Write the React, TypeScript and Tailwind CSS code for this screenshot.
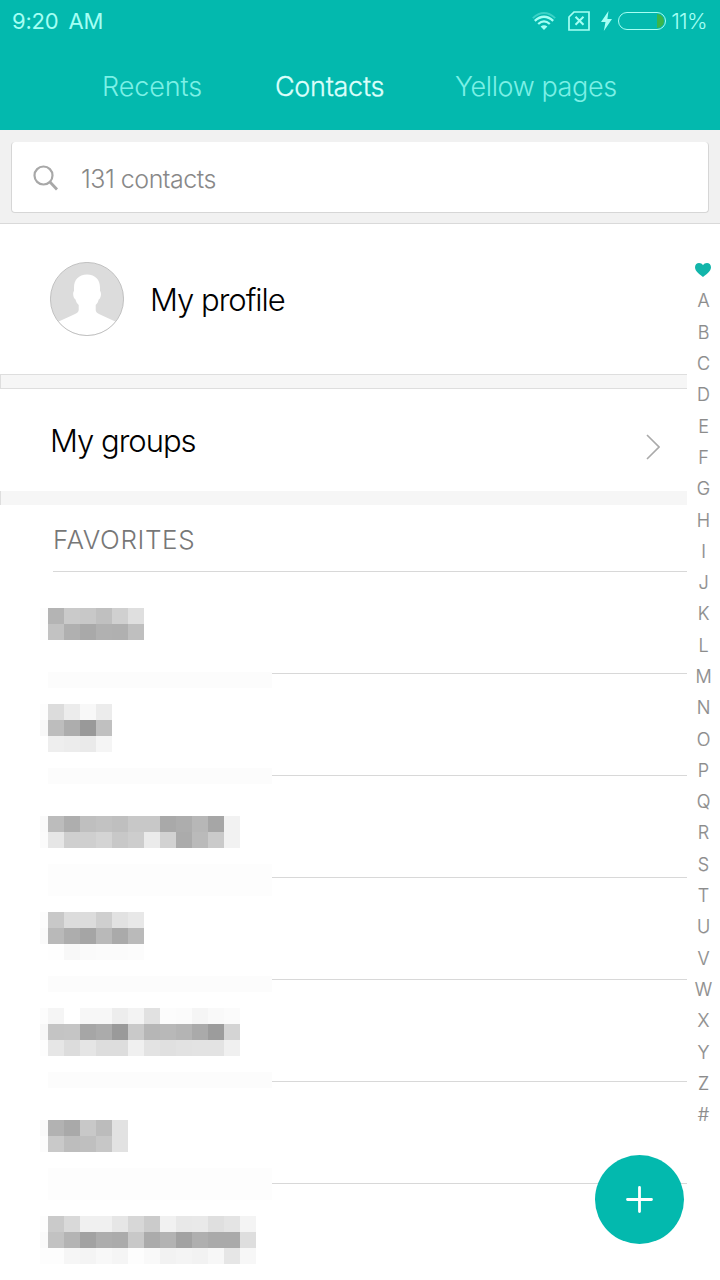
import clsx from 'clsx';

interface Favorite {
  id: number;
  offset: string;
  edge: string[];
  cells: string[][];
  veil?: string;
}

// Every name is hidden behind a mosaic of 16px grey tiles, one hex level per tile.
const FAVORITES: Favorite[] = [
  {
    id: 1,
    offset: 'pt-[36px]',
    edge: ['fd', 'fd'],
    cells: [
      ['b4', 'ca', 'c8', 'c0', 'd0', 'df'],
      ['c2', 'b0', 'a9', 'b1', 'b0', 'bf'],
    ],
    veil: 'top-[100px] h-[16px] bg-[#fcfcfc]',
  },
  {
    id: 2,
    offset: 'pt-[30px]',
    edge: ['fd', 'f8', 'ff'],
    cells: [
      ['dc', 'ec', 'f8', 'ec'],
      ['bd', 'ad', '99', 'c0'],
      ['ee', 'ec', 'ea', 'f5'],
    ],
    veil: 'top-[94px] h-[16px] bg-[#fcfcfc]',
  },
  {
    id: 3,
    offset: 'pt-[40px]',
    edge: ['fa', 'fb'],
    cells: [
      ['bc', 'ae', 'bf', 'c2', 'bf', 'c8', 'c8', 'a9', 'ad', 'b7', 'a6', 'f2'],
      ['e6', 'cf', 'cf', 'd4', 'c8', 'cd', 'eb', 'd2', 'ab', 'ba', 'ca', 'f2'],
    ],
    veil: 'top-[88px] h-[32px] bg-[#fdfdfd]',
  },
  {
    id: 4,
    offset: 'pt-[34px]',
    edge: ['fc', 'fa', 'ff'],
    cells: [
      ['c8', 'dc', 'dc', 'cf', 'e2', 'e8'],
      ['b9', 'ad', 'a5', 'b9', 'aa', 'ba'],
      ['fe', 'f8', 'fa', 'fb', 'fb', 'fc'],
    ],
    veil: 'top-[98px] h-[16px] bg-[#fcfcfc]',
  },
  {
    id: 5,
    offset: 'pt-[28px]',
    edge: ['fc', 'f7', 'fd'],
    cells: [
      ['f5', 'ff', 'f7', 'f7', 'ed', 'f3', 'e1', 'fc', 'fb', 'f5', 'f9', 'fb'],
      ['c4', 'c5', 'a6', 'ab', '9a', 'c9', 'b6', 'b8', 'b4', 'aa', '9c', 'd4'],
      ['e6', 'dc', 'e5', 'dd', 'dd', 'f0', 'e3', 'e0', 'e2', 'e3', 'e3', 'f0'],
    ],
    veil: 'top-[92px] h-[16px] bg-[#fcfcfc]',
  },
  {
    id: 6,
    offset: 'pt-[38px]',
    edge: ['f9', 'fc'],
    cells: [
      ['b2', 'a9', 'c8', 'bc', 'e2'],
      ['c9', 'bd', 'bf', 'c7', 'e2'],
    ],
    veil: 'top-[86px] h-[32px] bg-[#fdfdfd]',
  },
  {
    id: 7,
    offset: 'pt-[32px]',
    edge: ['fd', 'fa', 'fd'],
    cells: [
      ['ca', 'd9', 'f0', 'f0', 'e6', 'd7', 'cb', 'f1', 'e8', 'e9', 'df', 'e4', 'f4'],
      ['c2', 'b4', 'a2', 'ad', 'ab', 'c8', 'ab', 'b3', 'a2', 'af', 'aa', 'aa', 'de'],
      ['fd', 'f6', 'f4', 'f8', 'f5', 'fd', 'f9', 'f2', 'f4', 'f2', 'f7', 'e6', 'f7'],
    ],
  },
];

const INDEX = 'ABCDEFGHIJKLMNOPQRSTUVWXYZ#'.split('');

const StatusBar = () => (
  <div className="flex h-[42px] items-center justify-between pl-3 pr-[13px] text-[#a5fff4]">
    <span className="text-[22px] tracking-[-0.2px] [word-spacing:4px]">9:20 AM</span>
    <div className="flex items-center">
      <svg className="mr-3" width="24" height="18" viewBox="0 0 24 18" fill="none" stroke="currentColor">
        <path d="M.8 6.200Q12-4.200 23.200 6.200" strokeWidth="1.8" opacity="0.35" />
        <path d="M2.800 8.800Q12 .6 21.200 8.800" strokeWidth="2.4" />
        <path d="M6.200 12Q12 6.800 17.800 12" strokeWidth="2.3" />
        <path d="M8.600 14.600Q12 11.800 15.400 14.600L12 18z" fill="currentColor" stroke="none" />
      </svg>
      <svg className="mr-[11px]" width="22" height="20" viewBox="0 0 22 20" fill="none" stroke="currentColor" strokeWidth="1.7">
        <path d="M6 1h15v18H1V6z" />
        <path d="M7.500 5.800l8 8M15.500 5.800l-8 8" strokeWidth="2" />
      </svg>
      <svg className="mr-1.5" width="11" height="20" viewBox="0 0 11 20" fill="currentColor">
        <path d="M7.5 0L0 11h4.500L2.800 20 11 8H6.400z" />
      </svg>
      <div className="flex h-[18px] w-[48px] justify-end overflow-hidden rounded-full border-[1.5px] border-current p-px">
        <div className="h-full w-[7px] rounded-r-full bg-[#3bb54a]" />
      </div>
      <span className="ml-[5px] text-[22px] font-light tracking-[-0.7px]">11%</span>
    </div>
  </div>
);

const Tabs = () => (
  <nav className="flex h-[88px] items-center pt-0.5 pl-[102px] text-[27px] font-light text-[#7cf0e6]">
    <span className="w-[173px] tracking-[-0.1px]">Recents</span>
    <span className="w-[180px] tracking-[-0.3px] text-[#dcfffb] [-webkit-text-stroke:0.3px]">Contacts</span>
    <span className="tracking-[-0.4px]">Yellow pages</span>
  </nav>
);

const SearchBar = () => (
  <div className="h-[94px] border-b border-[#d9d9d9] bg-[#f1f1f1] px-[11px] pt-3">
    <div className="flex h-[71px] items-center rounded-[4px] border border-t-0 border-[#d6d6d6] bg-white pl-[21px]">
      <svg className="mt-px" width="26" height="26" viewBox="0 0 26 26" fill="none" stroke="#a8a8a8" strokeWidth="2.2">
        <circle cx="10.500" cy="10.500" r="9" />
        <path d="M17 17l7 7.500" strokeWidth="2.8" />
      </svg>
      <span className="mt-[5px] ml-[22px] text-[25px] font-light tracking-[-0.5px] text-[#888]">131 contacts</span>
    </div>
  </div>
);

const Avatar = () => (
  <svg width="74" height="74" viewBox="0 0 74 74">
    <circle cx="37" cy="37" r="36.5" fill="#dcdcdc" />
    <path
      d="M37 12.500C28.500 12.500 24 18 24 25.500V29C22.500 30.500 23 36 25.500 37.500C26.300 40 27 41.500 28.700 43V48C28.700 50 27 51 24 52.500L8.700 59.500A36.500 36.500 0 0 0 65.300 59.500L50 52.500C47 51 45.700 50 45.700 48V43C47.300 41.500 48 40 48.700 37.500C51.200 36 51.700 30.500 50 29V25.500C50 18 45.500 12.500 37 12.500z"
      fill="#fff"
    />
    <circle cx="37" cy="37" r="36.600" fill="none" stroke="#b5b5b5" strokeWidth="0.8" />
  </svg>
);

const FavoriteRow = ({ favorite }: { favorite: Favorite }) => (
  <li className={clsx('relative flex h-[102px] items-start border-b border-[#d8d8d8] pl-[40px]', favorite.offset)}>
    <div>
      {favorite.cells.map((row, y) => (
        <div key={y} className="flex h-4">
          <div className="w-2" style={{ backgroundColor: `#${favorite.edge[y].repeat(3)}` }} />
          {row.map((level, x) => (
            <div key={x} className="w-4" style={{ backgroundColor: `#${level.repeat(3)}` }} />
          ))}
        </div>
      ))}
    </div>
    {/* the divider only shows to the right of the censored area */}
    <div className="absolute top-[101px] left-0 h-px w-[272px] bg-white" />
    {favorite.veil && <div className={clsx('absolute left-[48px] w-[224px]', favorite.veil)} />}
  </li>
);

const LetterIndex = () => (
  <div className="flex w-[33px] flex-col items-center pt-[30px] text-[18px] text-[#8c8c8c]">
    <div className="flex h-[31.31px] items-center pr-0.5">
      <svg width="18" height="16" viewBox="0 0 18 16" fill="#12b5aa">
        <path d="M9 15C6 12.500 1 9.500 1 5.200 1 2.600 2.900 1 5 1c1.700 0 3.200.8 4 2.300C9.800 1.800 11.300 1 13 1c2.100 0 4 1.600 4 4.200C17 9.500 12 12.500 9 15z" />
      </svg>
    </div>
    {INDEX.map((letter) => (
      <div key={letter} className="flex h-[31.31px] items-center font-light [-webkit-text-stroke:0.2px]">
        {letter}
      </div>
    ))}
  </div>
);

export default function App() {
  return (
    <div className="relative h-[1280px] w-[720px] overflow-hidden bg-white font-['Inter','Liberation_Sans',sans-serif]">
      <header className="h-[130px] bg-[#03b9ae]">
        <StatusBar />
        <Tabs />
      </header>
      <SearchBar />

      <div className="flex">
        <main className="w-[687px]">
          <div className="flex h-[150px] items-center gap-[26px] pl-[50px] text-[31px] font-light text-black">
            <Avatar />
            <span className="pt-0.5 tracking-[-1px]">My profile</span>
          </div>
          <div className="h-[15px] border border-r-0 border-[#dedede] bg-[#f6f6f6]" />
          <div className="flex h-[102px] items-center justify-between pl-[50px] pr-[27px]">
            <span className="pt-0.5 text-[31px] font-light tracking-[-1px] text-black">My groups</span>
            <svg className="mt-[14px]" width="14" height="26" viewBox="0 0 14 26" fill="none" stroke="#aaa" strokeWidth="1.6">
              <path d="M1 1l12 12L1 25" />
            </svg>
          </div>
          <div className="h-[14px] border-l border-[#dedede] bg-[#f6f6f6]" />
          <div className="flex h-[66px] items-center pt-0.5 pl-[53px] text-[26px] font-light tracking-[0.6px] text-[#777]">
            FAVORITES
          </div>
          <div className="ml-[53px] h-px bg-[#d8d8d8]" />
          <ul>
            {FAVORITES.map((favorite) => (
              <FavoriteRow key={favorite.id} favorite={favorite} />
            ))}
          </ul>
        </main>
        <LetterIndex />
      </div>

      <button
        aria-label="Add contact"
        className="absolute top-[1155px] left-[595px] flex h-[89px] w-[89px] items-center justify-center rounded-full bg-[#03b9ae]"
      >
        <svg width="27" height="27" viewBox="0 0 27 27" fill="none" stroke="#fff" strokeWidth="2.8" strokeLinecap="round">
          <path d="M13.500 1.500v24M1.500 13.500h24" />
        </svg>
      </button>
    </div>
  );
}
